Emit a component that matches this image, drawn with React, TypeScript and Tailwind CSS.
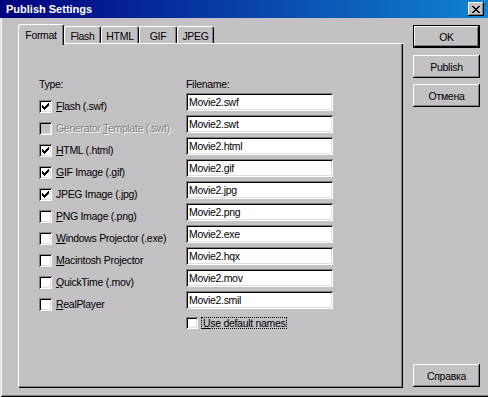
import React from 'react';

const raised = 'shadow-[inset_-1px_-1px_0_#000,inset_1px_1px_0_#fff,inset_-2px_-2px_0_#808080]';
const sunken = 'shadow-[inset_1px_1px_0_#808080,inset_-1px_-1px_0_#fff,inset_2px_2px_0_#000,inset_-2px_-2px_0_#dfdfdf]';

const CheckMark = () => (
  <svg width="7" height="7" viewBox="0 0 7 7" shapeRendering="crispEdges">
    <rect x="6" y="0" width="1" height="1" />
    <rect x="5" y="1" width="2" height="1" />
    <rect x="0" y="2" width="1" height="1" />
    <rect x="4" y="2" width="3" height="1" />
    <rect x="0" y="3" width="2" height="1" />
    <rect x="3" y="3" width="3" height="1" />
    <rect x="0" y="4" width="5" height="1" />
    <rect x="1" y="5" width="3" height="1" />
    <rect x="2" y="6" width="1" height="1" />
  </svg>
);

const CheckBox = ({ checked, disabled }: { checked?: boolean; disabled?: boolean }) => (
  <span
    className={`w-[13px] h-[13px] shrink-0 flex items-center justify-center ${sunken} ${
      disabled ? 'bg-[#c3c1c4]' : 'bg-white'
    }`}
  >
    {checked && <CheckMark />}
  </span>
);

const formats = [
  { key: 'F', rest: 'lash (.swf)', file: 'Movie2.swf', checked: true },
  { pre: 'Generator ', key: 'T', rest: 'emplate (.swt)', file: 'Movie2.swt', disabled: true },
  { key: 'H', rest: 'TML (.html)', file: 'Movie2.html', checked: true },
  { key: 'G', rest: 'IF Image (.gif)', file: 'Movie2.gif', checked: true },
  { pre: 'JPEG Image (.jpg)', key: '', rest: '', file: 'Movie2.jpg', checked: true },
  { key: 'P', rest: 'NG Image (.png)', file: 'Movie2.png' },
  { key: 'W', rest: 'indows Projector (.exe)', file: 'Movie2.exe' },
  { key: 'M', rest: 'acintosh Projector', file: 'Movie2.hqx' },
  { key: 'Q', rest: 'uickTime (.mov)', file: 'Movie2.mov' },
  { key: 'R', rest: 'ealPlayer', file: 'Movie2.smil' },
];

const tabs = [
  { label: 'Format', w: 'w-[46px]' },
  { label: 'Flash', w: 'w-[37px]' },
  { label: 'HTML', w: 'w-[38px]' },
  { label: 'GIF', w: 'w-[38px]' },
  { label: 'JPEG', w: 'w-[37px]' },
];

const CloseGlyph = () => (
  <svg width="8" height="7" viewBox="0 0 8 7" shapeRendering="crispEdges">
    <rect x="0" y="0" width="2" height="1" />
    <rect x="6" y="0" width="2" height="1" />
    <rect x="1" y="1" width="2" height="1" />
    <rect x="5" y="1" width="2" height="1" />
    <rect x="2" y="2" width="4" height="1" />
    <rect x="3" y="3" width="2" height="1" />
    <rect x="2" y="4" width="4" height="1" />
    <rect x="1" y="5" width="2" height="1" />
    <rect x="5" y="5" width="2" height="1" />
    <rect x="0" y="6" width="2" height="1" />
    <rect x="6" y="6" width="2" height="1" />
  </svg>
);

const Button = ({ children, primary }: { children: React.ReactNode; primary?: boolean }) => (
  <div
    className={`h-[23px] w-[67px] flex items-center justify-center bg-[#c3c1c4] ${
      primary
        ? 'shadow-[inset_0_0_0_1px_#000,inset_-2px_-2px_0_#000,inset_2px_2px_0_#fff,inset_-3px_-3px_0_#808080]'
        : raised
    }`}
  >
    {children}
  </div>
);

export default function App(): React.JSX.Element {
  return (
    <div className="w-[488px] h-[397px] bg-[#c3c1c4] flex flex-col overflow-hidden font-['Liberation_Sans',Arial,sans-serif] text-[10.5px] tracking-[-0.3px] leading-[12px] text-black select-none">
      {/* title bar */}
      <div className="h-[18px] shrink-0 flex items-center justify-between pl-[6px] pr-[4px] bg-[linear-gradient(to_right,#000080,#1084d0)]">
        <span className="text-white font-bold text-[11px] tracking-normal">Publish Settings</span>
        <div className={`w-[16px] h-[14px] flex items-center justify-center bg-[#c3c1c4] ${raised}`}>
          <CloseGlyph />
        </div>
      </div>

      <div className="flex-1 flex shadow-[inset_1px_0_0_#dfdfdf,inset_0_-1px_0_#000,inset_2px_0_0_#fff,inset_0_-2px_0_#808080]">
        {/* tab control */}
        <div className="w-[403px] pl-[18px] pt-[6px] pb-[9px] flex flex-col">
          <div className="h-[19px] flex items-end">
            {tabs.map((t, i) =>
              i === 0 ? (
                <div
                  key={t.label}
                  className={`${t.w} h-[21px] -mb-[2px] relative z-10 bg-[#c3c1c4] rounded-t-[3px] border-t border-l border-r border-t-white border-l-white border-r-black shadow-[inset_-1px_0_0_#808080] flex items-start justify-center pt-[4px]`}
                >
                  {t.label}
                </div>
              ) : (
                <div
                  key={t.label}
                  className={`${t.w} h-[17px] bg-[#c3c1c4] rounded-t-[3px] border-t border-l border-r border-t-white border-l-white border-r-black shadow-[inset_-1px_0_0_#808080] flex items-start justify-center pt-[3px]`}
                >
                  {t.label}
                </div>
              )
            )}
          </div>
          <div className="flex-1 flex pl-[21px] pt-[35px] shadow-[inset_1px_1px_0_#fff,inset_-1px_-1px_0_#000,inset_-2px_-2px_0_#808080]">
            <div className="w-[147px] flex flex-col">
              <div className="h-[12px]">Type:</div>
              <div className="mt-[5px] flex flex-col">
                {formats.map((f) => (
                  <div key={f.file} className="h-[22px] flex items-center gap-[4px]">
                    <CheckBox checked={f.checked} disabled={f.disabled} />
                    <span
                      className={`whitespace-nowrap ${
                        f.disabled ? 'text-[#808080] [text-shadow:1px_1px_0_#fff]' : ''
                      }`}
                    >
                      {f.pre}
                      {f.key && <u>{f.key}</u>}
                      {f.rest}
                    </span>
                  </div>
                ))}
              </div>
            </div>
            <div className="w-[147px] flex flex-col">
              <div className="h-[12px]">Filename:</div>
              <div className="mt-[3px] flex flex-col gap-[4px]">
                {formats.map((f) => (
                  <div key={f.file} className={`h-[18px] flex items-center pl-[3px] bg-white ${sunken}`}>
                    {f.file}
                  </div>
                ))}
              </div>
              <div className="mt-[8px] h-[12px] flex items-center gap-[3px]">
                <span className={`w-[12px] h-[12px] bg-white ${sunken}`} />
                <span className="border border-dotted border-black px-[1px] leading-[10px]">
                  <u>U</u>se default names
                </span>
              </div>
            </div>
          </div>
        </div>

        {/* buttons */}
        <div className="ml-[10px] pt-[7px] pb-[10px] flex flex-col">
          <Button primary>OK</Button>
          <div className="mt-[7px]">
            <Button>Publish</Button>
          </div>
          <div className="mt-[6px]">
            <Button>Отмена</Button>
          </div>
          <div className="flex-1" />
          <Button>Справка</Button>
        </div>
      </div>
    </div>
  );
}
